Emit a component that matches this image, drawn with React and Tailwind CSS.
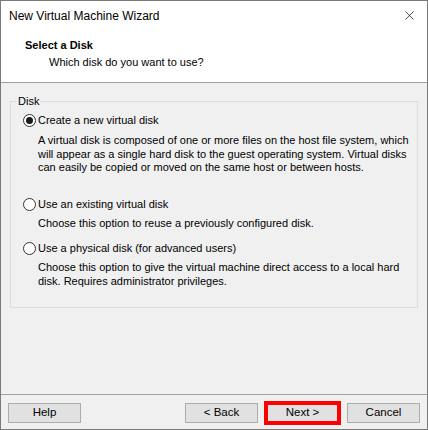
import { X } from 'lucide-react'

const FONT = { fontFamily: '"Liberation Sans", Arial, sans-serif' }

function Radio({ checked, label }) {
  return (
    <div className="flex h-[16px] items-center gap-[2px] pl-[12px]">
      <span className="flex h-[13px] w-[13px] items-center justify-center rounded-full border border-[#333333] bg-white">
        {checked && <span className="h-[7px] w-[7px] rounded-full bg-[#1a1a1a]" />}
      </span>
      <span>{label}</span>
    </div>
  )
}

function Btn({ children, highlight }) {
  return (
    <div className="relative">
      <button className="flex h-[20px] w-[73px] items-center justify-center border border-[#adadad] bg-[#e1e1e1] text-[11.5px] text-black">
        {children}
      </button>
      {highlight && <div className="pointer-events-none absolute left-[-2px] top-[-2px] h-[24px] w-[77px] border-[4px] border-[#ff0000]" />}
    </div>
  )
}

export default function App() {
  return (
    <div style={FONT} className="flex h-[430px] w-[428px] flex-col border border-[#7a7a7a] bg-[#f0f0f0] text-[11px] text-black">
      {/* title bar */}
      <div className="flex h-[29px] items-center justify-between bg-white pl-[8px] pr-[10px] text-[12px]">
        <span>New Virtual Machine Wizard</span>
        <X size={15} strokeWidth={1.1} />
      </div>

      {/* header */}
      <div className="h-[53px] border-b border-[#a0a0a0] bg-white pl-[24px] pt-[8px]">
        <div className="font-bold leading-[15px]">Select a Disk</div>
        <div className="pl-[24px] pt-[2px] leading-[15px]">Which disk do you want to use?</div>
      </div>

      {/* body */}
      <div className="flex-1">
        <fieldset className="ml-[9px] mt-[11px] w-[408px] border border-[#dcdcdc] pb-[19px]">
          <legend className="ml-[6px] px-[1px] leading-[14px]">Disk</legend>
          <div className="mt-[4px]">
            <Radio checked label="Create a new virtual disk" />
          </div>
          <p className="mt-[6px] pl-[27px] pr-[8px] leading-[13.5px]">
            A virtual disk is composed of one or more files on the host file system, which will appear as a single hard disk to the guest operating system. Virtual disks can easily be copied or moved on the same host or between hosts.
          </p>
          <div className="mt-[22px]">
            <Radio label="Use an existing virtual disk" />
          </div>
          <p className="mt-[4px] pl-[27px] pr-[8px] leading-[13.5px]">Choose this option to reuse a previously configured disk.</p>
          <div className="mt-[10px]">
            <Radio label="Use a physical disk (for advanced users)" />
          </div>
          <p className="mt-[5px] pl-[27px] pr-[8px] leading-[13.5px]">
            Choose this option to give the virtual machine direct access to a local hard disk. Requires administrator privileges.
          </p>
        </fieldset>
      </div>

      {/* footer */}
      <div className="flex h-[35px] items-start border-t border-[#a0a0a0] px-[7px] pt-[8px]">
        <Btn>Help</Btn>
        <div className="ml-auto flex gap-[8px]">
          <Btn>&lt; Back</Btn>
          <Btn highlight>Next &gt;</Btn>
          <Btn>Cancel</Btn>
        </div>
      </div>
    </div>
  )
}
